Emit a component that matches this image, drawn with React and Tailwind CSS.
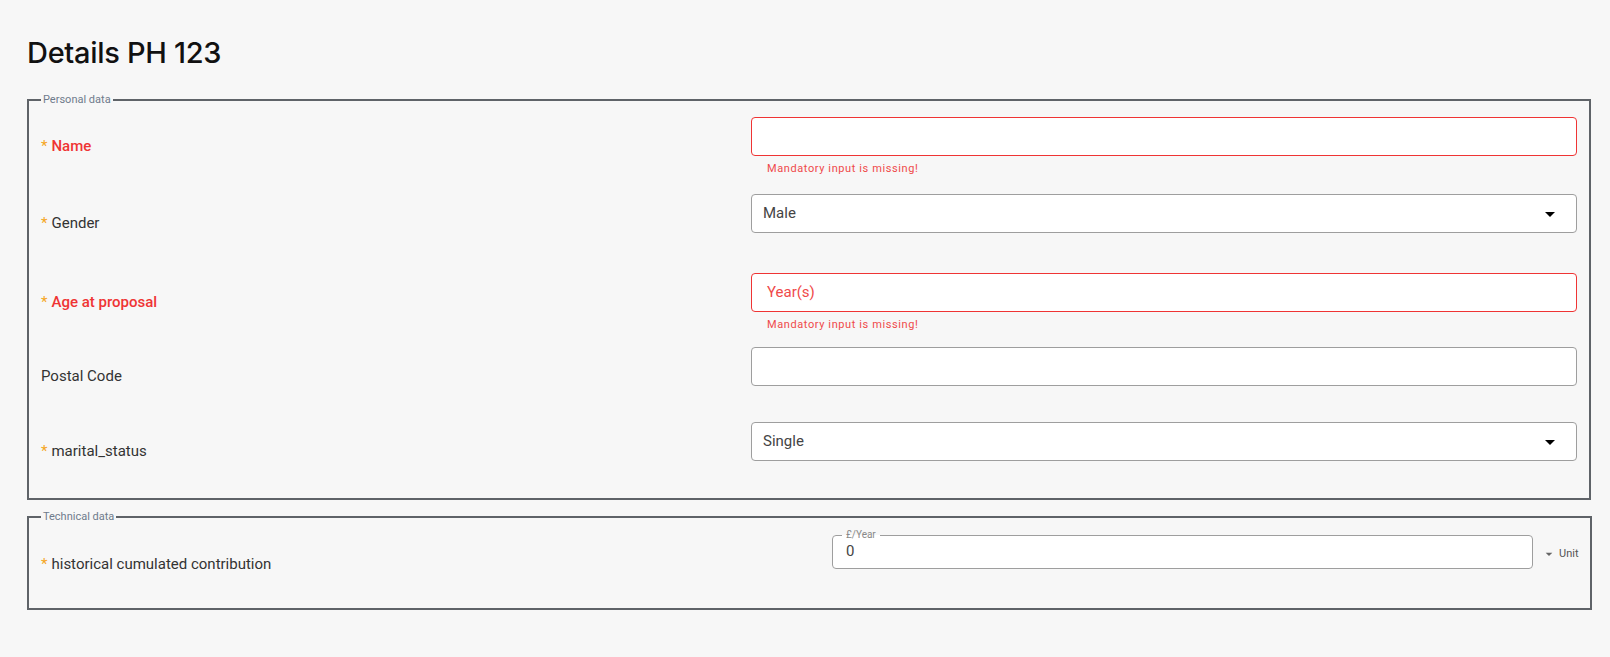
import React from 'react'

const font = { fontFamily: 'Roboto, "Noto Sans", sans-serif' }

function DropArrow({ className }) {
  return (
    <svg viewBox="0 0 24 24" className={className} fill="currentColor">
      <path d="M7 10l5 5 5-5z" />
    </svg>
  )
}

function Label({ text, required, error }) {
  return (
    <div className="w-[710px] shrink-0 pt-[19px] text-[15px] leading-[20px]">
      {required && <span className="text-[#f5a623] mr-[4px]">*</span>}
      <span className={error ? 'text-[#ef3434] font-medium' : 'text-[#333]'}>{text}</span>
    </div>
  )
}

function Row({ label, required, error, value, placeholder, select, height }) {
  return (
    <div className={`flex ${height}`}>
      <Label text={label} required={required} error={!!error} />
      <div className="flex-1">
        <div
          className={`h-[39px] flex items-center justify-between rounded-[4px] bg-white border pl-[11px] pr-[14px] ${
            error ? 'border-[#ef3434]' : 'border-[#9e9e9e]'
          }`}
        >
          {value && <span className="text-[15px] text-[#444]">{value}</span>}
          {placeholder && <span className="text-[15px] text-[#ef4a4a] pl-[4px]">{placeholder}</span>}
          {!value && !placeholder && <span />}
          {select && <DropArrow className="w-[24px] h-[24px] text-black" />}
        </div>
        {error && (
          <div className="pl-[16px] pt-[3px] text-[11px] leading-[20px] tracking-[0.6px] text-[#ef4a4a]">{error}</div>
        )}
      </div>
    </div>
  )
}

export default function App() {
  const missing = 'Mandatory input is missing!'
  return (
    <div className="min-h-screen bg-[#f7f7f7] pl-[27px] pr-[19px] pt-[33px]" style={font}>
      <h1
        className="text-[29px] font-medium text-[#111] leading-[40px] tracking-[-0.3px] mb-[20px]"
        style={{ fontFamily: 'Inter, "Noto Sans", sans-serif' }}
      >
        Details PH 123
      </h1>

      {/* Personal data */}
      <fieldset className="border-2 border-[#5f6368] pl-[12px] pr-[12px] pt-[11px] pb-0">
        <legend className="px-[2px] text-[11px] leading-[13px] text-[#6f7b8c]">Personal data</legend>
        <Row label="Name" required error={missing} height="h-[77px]" />
        <Row label="Gender" required value="Male" select height="h-[79px]" />
        <Row label="Age at proposal" required error={missing} placeholder="Year(s)" height="h-[74px]" />
        <Row label="Postal Code" height="h-[75px]" />
        <Row label="marital_status" required value="Single" select height="h-[76px]" />
      </fieldset>

      {/* Technical data */}
      <fieldset className="mt-[10px] border-2 border-[#5f6368] pl-[12px] pr-[12px] pt-[12px] pb-[34px]">
        <legend className="px-[2px] text-[11px] leading-[13px] text-[#6f7b8c]">Technical data</legend>
        <div className="flex">
          <div className="w-[791px] shrink-0 pt-[19px] text-[15px] leading-[20px]">
            <span className="text-[#f5a623] mr-[4px]">*</span>
            <span className="text-[#333]">historical cumulated contribution</span>
          </div>
          <fieldset className="w-[701px] h-[40px] -mt-[6px] border border-[#9e9e9e] rounded-[4px] bg-white px-[8px] pt-0">
            <legend className="ml-[1px] px-[4px] text-[10px] leading-[12px] text-[#888]">£/Year</legend>
            <div className="pl-[5px] -mt-[1px] text-[15px] leading-[22px] text-[#444]">0</div>
          </fieldset>
          <div className="flex items-center h-[38px] ml-[10px] text-[11px] text-[#555]">
            <DropArrow className="w-[16px] h-[16px] text-[#666] -ml-[2px]" />
            <span className="ml-[2px]">Unit</span>
          </div>
        </div>
      </fieldset>
    </div>
  )
}
